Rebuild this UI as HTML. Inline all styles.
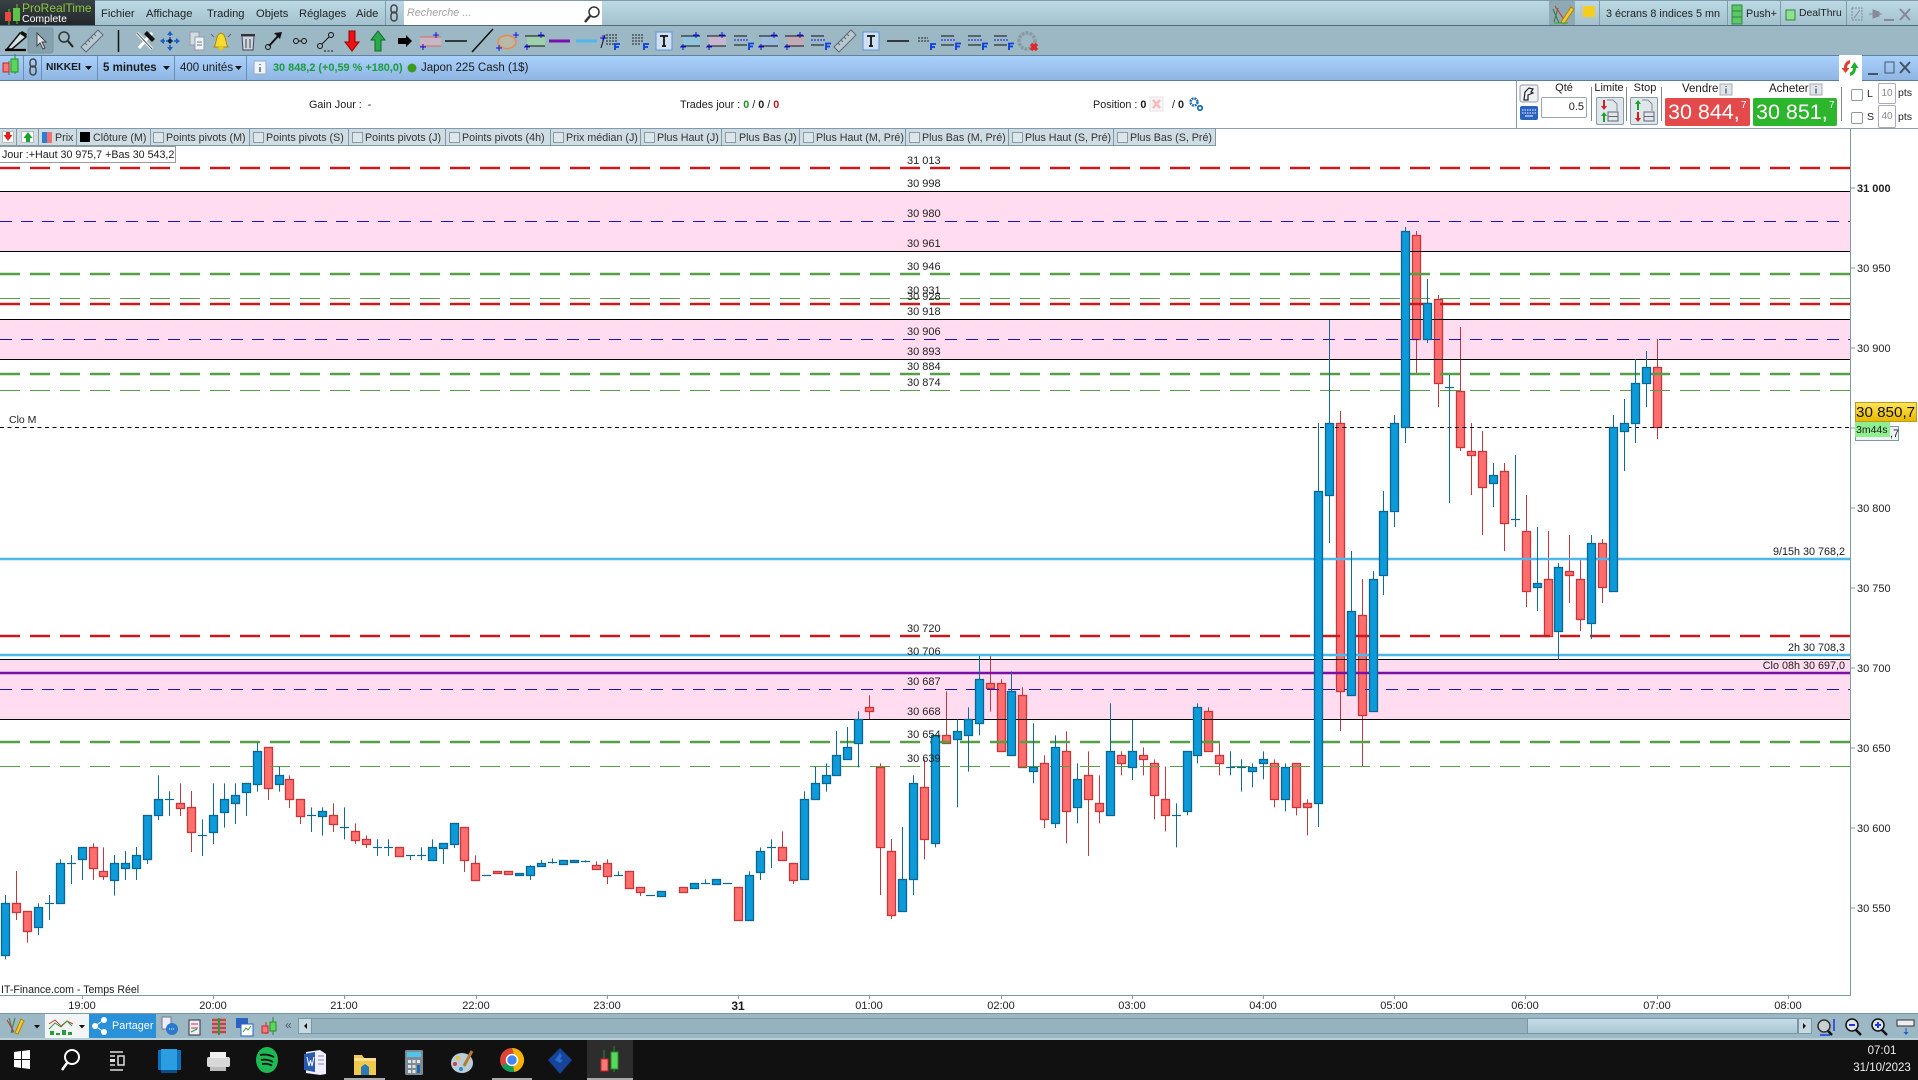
<!DOCTYPE html>
<html lang="fr"><head><meta charset="utf-8"><title>ProRealTime</title>
<style>
html,body{margin:0;padding:0;background:#fff}
body{position:relative;width:1918px;height:1080px;overflow:hidden;font:11px/14px "Liberation Sans",Arial,sans-serif;color:#1c1c1c}
.a{position:absolute}
.t{position:absolute;white-space:nowrap}
.c{position:absolute;white-space:nowrap;transform:translateX(-50%)}
.m{font-size:11.2px;color:#222}
.v{position:absolute;width:1px;background:#7f9aa8}
.p{position:absolute;white-space:nowrap;left:907px;color:#222;font-size:11px}
.y{position:absolute;white-space:nowrap;left:1857px;color:#222;font-size:11px}
.l{position:absolute;top:131px;white-space:nowrap;color:#333;font-size:10.7px}
.b{position:absolute;top:132px;width:9px;height:9px;border:1px solid #8b9ba3;background:#dde6ea}
svg{position:absolute;left:0;top:0}
</style></head><body>
<!-- bars -->
<div class="a" style="left:0;top:0;width:1918px;height:25px;background:linear-gradient(#bcd9e5,#a3c2ce);border-top:1px solid #7f9aa8;box-sizing:border-box"></div>
<div class="a" style="left:0;top:25px;width:1918px;height:1px;background:#4f6d7c"></div>
<div class="a" style="left:0;top:26px;width:1918px;height:29px;background:#9bb8c4"></div>
<div class="a" style="left:0;top:55px;width:1918px;height:25px;background:linear-gradient(#a9d1fc,#8fb6e2);border-top:1px solid #5f82a0;box-sizing:border-box"></div>
<div class="a" style="left:0;top:80px;width:1918px;height:1px;background:#5d7c99"></div>
<div class="a" style="left:0;top:128px;width:1918px;height:1px;background:#8ba0aa"></div>
<div class="a" style="left:0;top:0;width:95px;height:25px;background:linear-gradient(#3a4246,#22282b)"></div>
<div class="t" style="left:22px;top:2px;color:#8cc63f;font-size:12px;line-height:12px">ProRealTime</div>
<div class="t" style="left:22px;top:14px;color:#fff;font-size:10.5px;line-height:11px">Complete</div>
<div class="t m" style="left:101px;top:7px">Fichier</div>
<div class="t m" style="left:146px;top:7px">Affichage</div>
<div class="t m" style="left:207px;top:7px">Trading</div>
<div class="t m" style="left:256px;top:7px">Objets</div>
<div class="t m" style="left:299px;top:7px">Réglages</div>
<div class="t m" style="left:356px;top:7px">Aide</div>
<div class="v" style="left:385px;top:1px;height:24px"></div>
<div class="a" style="left:404px;top:1px;width:198px;height:24px;background:#fff"></div>
<div class="t" style="left:407px;top:6px;color:#a0a0a0;font-style:italic;font-size:10.8px">Recherche ...</div>
<div class="a" style="left:1549px;top:1px;width:26px;height:24px;background:#8ea9b4"></div>
<div class="v" style="left:1599px;top:1px;height:24px"></div>
<div class="t" style="left:1606px;top:7px;font-size:10.8px;color:#222">3 écrans 8 indices 5 mn</div>
<div class="v" style="left:1727px;top:1px;height:24px"></div>
<div class="t" style="left:1746px;top:7px;font-size:10.8px;color:#222">Push+</div>
<div class="v" style="left:1780px;top:1px;height:24px"></div>
<div class="t" style="left:1799px;top:7px;font-size:10.4px;color:#222">DealThru</div>
<div class="v" style="left:1846px;top:1px;height:24px"></div>
<!-- blue bar text -->
<div class="v" style="left:23px;top:56px;height:24px;background:#6a8db0"></div>
<div class="v" style="left:41px;top:56px;height:24px;background:#6a8db0"></div>
<div class="t" style="left:46px;top:61px;font-weight:bold;font-size:10.3px">NIKKEI</div>
<div class="v" style="left:97px;top:56px;height:24px;background:#6a8db0"></div>
<div class="t" style="left:103px;top:61px;font-size:11.5px;font-weight:bold">5 minutes</div>
<div class="v" style="left:174px;top:56px;height:24px;background:#6a8db0"></div>
<div class="t" style="left:180px;top:61px;font-size:11.5px">400 unités</div>
<div class="v" style="left:246px;top:56px;height:24px;background:#6a8db0"></div>
<div class="t" style="left:273px;top:61px;color:#1c9a3c;font-size:10.9px;font-weight:bold">30 848,2 (+0,59 % +180,0)</div>
<div class="t" style="left:421px;top:61px;font-size:11.5px">Japon 225 Cash (1$)</div>
<div class="a" style="left:1839px;top:55px;width:23px;height:26px;background:#fff"></div>
<!-- info row -->
<div class="t" style="left:309px;top:98px;font-size:10.8px">Gain Jour :&nbsp; -</div>
<div class="t" style="left:680px;top:98px;font-size:10.8px">Trades jour :&nbsp;<b style="color:#2a8a2a">0</b> / <b>0</b> / <b style="color:#b02020">0</b></div>
<div class="t" style="left:1093px;top:98px;font-size:10.8px">Position :&nbsp;<b>0</b></div>
<div class="t" style="left:1172px;top:98px;font-size:10.8px">/ <b>0</b></div>
<!-- order panel -->
<div class="v" style="left:1516px;top:81px;height:47px;background:#8ba0aa"></div>
<div class="c" style="left:1564px;top:81px">Qté</div>
<div class="a" style="left:1541px;top:97px;width:44px;height:19px;border:1px solid #9aa;border-radius:2px;background:#fff;text-align:right;line-height:19px;box-sizing:content-box"><span style="padding-right:2px">0.5</span></div>
<div class="c" style="left:1609px;top:81px">Limite</div>
<div class="c" style="left:1645px;top:81px">Stop</div>
<div class="v" style="left:1591px;top:87px;height:34px;background:#888"></div>
<div class="v" style="left:1626px;top:87px;height:34px;background:#888"></div>
<div class="v" style="left:1661px;top:87px;height:34px;background:#888"></div>
<div class="v" style="left:1841px;top:87px;height:34px;background:#888"></div>
<div class="a" style="left:1596px;top:97px;width:26px;height:26px;border:1px solid #8b9ba3;border-radius:2px;background:#dfe7ea"></div>
<div class="a" style="left:1630px;top:97px;width:26px;height:26px;border:1px solid #8b9ba3;border-radius:2px;background:#dfe7ea"></div>
<div class="t" style="left:1682px;top:82px;font-size:11.5px">Vendre</div>
<div class="t" style="left:1769px;top:82px;font-size:11.5px">Acheter</div>
<div class="a" style="left:1665px;top:98px;width:85px;height:28px;background:#e44a4c;border-radius:2px"></div>
<div class="a" style="left:1753px;top:98px;width:84px;height:28px;background:#2db52d;border-radius:2px"></div>
<div class="t" style="left:1668px;top:100px;color:#fff;font-size:21.5px;line-height:24px">30 844,</div>
<div class="t" style="left:1741px;top:100px;color:#fff;font-size:10px;line-height:12px">7</div>
<div class="t" style="left:1756px;top:100px;color:#fff;font-size:21.5px;line-height:24px">30 851,</div>
<div class="t" style="left:1829px;top:100px;color:#fff;font-size:10px;line-height:12px">7</div>
<div class="a" style="left:1851px;top:89px;width:10px;height:10px;border:1px solid #8b9ba3;border-radius:2px;background:#fff"></div>
<div class="a" style="left:1851px;top:112px;width:10px;height:10px;border:1px solid #8b9ba3;border-radius:2px;background:#fff"></div>
<div class="t" style="left:1867px;top:87px;font-size:10.5px">L</div>
<div class="t" style="left:1867px;top:110px;font-size:10.5px">S</div>
<div class="a" style="left:1878px;top:83px;width:16px;height:19px;border:1px solid #aab;border-radius:2px;text-align:center;line-height:19px;color:#888;font-size:10px">10</div>
<div class="a" style="left:1878px;top:105px;width:16px;height:21px;border:1px solid #aab;border-radius:2px;text-align:center;line-height:21px;color:#888;font-size:10px">40</div>
<div class="t" style="left:1898px;top:86px;font-size:10.5px">pts</div>
<div class="t" style="left:1898px;top:110px;font-size:10.5px">pts</div>
<!-- legend -->
<div class="a" style="left:0;top:128px;width:1216px;height:18px;background:#cfdce3;border:1px solid #7f9aa8;border-left:0;box-sizing:border-box"></div>
<div class="v" style="left:16px;top:128px;height:18px"></div><div class="v" style="left:38px;top:128px;height:18px"></div>
<div class="v" style="left:76px;top:128px;height:18px"></div><div class="v" style="left:150px;top:128px;height:18px"></div>
<div class="v" style="left:249px;top:128px;height:18px"></div><div class="v" style="left:348px;top:128px;height:18px"></div>
<div class="v" style="left:445px;top:128px;height:18px"></div><div class="v" style="left:550px;top:128px;height:18px"></div>
<div class="v" style="left:640px;top:128px;height:18px"></div><div class="v" style="left:721px;top:128px;height:18px"></div>
<div class="v" style="left:799px;top:128px;height:18px"></div><div class="v" style="left:905px;top:128px;height:18px"></div>
<div class="v" style="left:1008px;top:128px;height:18px"></div><div class="v" style="left:1113px;top:128px;height:18px"></div>
<div class="a" style="left:2px;top:131px;width:12px;height:12px;background:#fff;border:1px solid #bbb;box-sizing:border-box"></div>
<div class="a" style="left:21px;top:131px;width:13px;height:12px;background:#fff;border:1px solid #bbb;box-sizing:border-box"></div>
<div class="a" style="left:42px;top:132px;width:5px;height:11px;background:#2b7fd4"></div><div class="a" style="left:47px;top:132px;width:5px;height:11px;background:#f4706c"></div>
<div class="l" style="left:55px">Prix</div>
<div class="a" style="left:80px;top:132px;width:10px;height:10px;background:#000"></div>
<div class="l" style="left:93px">Clôture (M)</div>
<div class="b" style="left:153px"></div><div class="l" style="left:166px">Points pivots (M)</div>
<div class="b" style="left:253px"></div><div class="l" style="left:266px">Points pivots (S)</div>
<div class="b" style="left:352px"></div><div class="l" style="left:365px">Points pivots (J)</div>
<div class="b" style="left:449px"></div><div class="l" style="left:462px">Points pivots (4h)</div>
<div class="b" style="left:553px"></div><div class="l" style="left:566px">Prix médian (J)</div>
<div class="b" style="left:644px"></div><div class="l" style="left:657px">Plus Haut (J)</div>
<div class="b" style="left:725px"></div><div class="l" style="left:739px">Plus Bas (J)</div>
<div class="b" style="left:803px"></div><div class="l" style="left:816px">Plus Haut (M, Pré)</div>
<div class="b" style="left:909px"></div><div class="l" style="left:922px">Plus Bas (M, Pré)</div>
<div class="b" style="left:1012px"></div><div class="l" style="left:1025px">Plus Haut (S, Pré)</div>
<div class="b" style="left:1117px"></div><div class="l" style="left:1130px">Plus Bas (S, Pré)</div>

<!-- chart -->
<svg width="1918" height="1080" id="chart" style="z-index:1">
<rect x="0" y="191" width="1850" height="60" fill="#ffdcef"/>
<rect x="0" y="319" width="1850" height="40" fill="#ffdcef"/>
<rect x="0" y="659" width="1850" height="60" fill="#ffdcef"/>
<g id="rc"></g>
<g fill="none">
<g stroke="#c8191e" stroke-width="2.6" stroke-dasharray="20 10"><path d="M0 168H1850M0 304H1850M0 636H1850"/></g>
<g stroke="#55a045" stroke-width="2.6" stroke-dasharray="20 10"><path d="M0 274H1850M0 374H1850M0 742H1850"/></g>
<g stroke="#55a045" stroke-width="1" stroke-dasharray="20 10"><path d="M0 298.5H1850M0 390.5H1850M0 766.5H1850"/></g>
<g stroke="#1818b0" stroke-width="1" stroke-dasharray="12 9"><path d="M0 221.5H1850M0 339.5H1850M0 689.5H1850"/></g>
<g stroke="#000" stroke-width="1"><path d="M0 191.5H1850M0 251.5H1850M0 319.5H1850M0 359.5H1850M0 659.5H1850M0 719.5H1850"/></g>
<path d="M0 427.5H1850" stroke="#000" stroke-dasharray="4 3.5"/>
<path d="M0 559H1850M0 655H1850" stroke="#4eb8ec" stroke-width="2.6"/>
<path d="M0 673H1850" stroke="#7a10a8" stroke-width="2.4"/>
</g>
<g id="bc"></g>
<path d="M1850.5 128V995.5H0" fill="none" stroke="#7f9aa0" shape-rendering="crispEdges"/>
<path d="M1850 188h5M1850 268h5M1850 348h5M1850 428h5M1850 508h5M1850 588h5M1850 668h5M1850 748h5M1850 828h5M1850 908h5M82.5 995v4M213.5 995v4M344.5 995v4M476.5 995v4M607.5 995v4M738.5 995v4M869.5 995v4M1001.5 995v4M1132.5 995v4M1263.5 995v4M1394.5 995v4M1525.5 995v4M1657.5 995v4M1788.5 995v4" stroke="#7f9aa0" fill="none" shape-rendering="crispEdges"/>
</svg>

<div style="position:absolute;left:0;top:0;width:0;height:0;z-index:2">
<div class="a" style="left:0;top:146px;width:176px;height:17px;border:1px solid #999;border-left:0;background:#fff;box-sizing:border-box"></div>
<div class="t" style="left:2px;top:148px;font-size:10.7px">Jour :+Haut 30 975,7 +Bas 30 543,2</div>
<div class="p" style="top:154px">31 013</div><div class="p" style="top:177px">30 998</div><div class="p" style="top:207px">30 980</div>
<div class="p" style="top:237px">30 961</div><div class="p" style="top:260px">30 946</div><div class="p" style="top:284px">30 931</div>
<div class="p" style="top:290px">30 928</div><div class="p" style="top:305px">30 918</div><div class="p" style="top:325px">30 906</div>
<div class="p" style="top:345px">30 893</div><div class="p" style="top:360px">30 884</div><div class="p" style="top:376px">30 874</div>
<div class="p" style="top:622px">30 720</div><div class="p" style="top:645px">30 706</div><div class="p" style="top:675px">30 687</div>
<div class="p" style="top:705px">30 668</div><div class="p" style="top:728px">30 654</div><div class="p" style="top:752px">30 639</div>
<div class="t" style="left:9px;top:413px;font-size:10.5px">Clo M</div>
<div class="t" style="right:-1845px;top:545px;font-size:10.8px">9/15h 30 768,2</div>
<div class="t" style="right:-1845px;top:641px;font-size:10.8px">2h 30 708,3</div>
<div class="t" style="right:-1845px;top:659px;font-size:10.8px">Clo 08h 30 697,0</div>
<div class="t" style="left:1px;top:983px;font-size:10.6px">IT-Finance.com - Temps Réel</div>
<div class="y" style="top:182px;font-weight:bold">31 000</div>
<div class="y" style="top:262px">30 950</div><div class="y" style="top:342px">30 900</div><div class="y" style="top:502px">30 800</div>
<div class="y" style="top:582px">30 750</div><div class="y" style="top:662px">30 700</div><div class="y" style="top:742px">30 650</div>
<div class="y" style="top:822px">30 600</div><div class="y" style="top:902px">30 550</div>
<div class="a" style="left:1855px;top:426px;width:44px;height:15px;border:1px solid #7f9aa0;background:#eef3f5;box-sizing:border-box"></div>
<div class="t" style="left:1890px;top:427px">,7</div>
<div class="a" style="left:1855px;top:402px;width:62px;height:20px;background:linear-gradient(#ffe45a,#e9b800);border:1px solid #b89a20;box-sizing:border-box"></div>
<div class="t" style="left:1856px;top:404px;font-size:15.2px;line-height:17px;color:#111">30 850,7</div>
<div class="a" style="left:1855px;top:422px;width:35px;height:15px;background:#8fee8f"></div>
<div class="t" style="left:1856px;top:423px;font-size:10.5px">3m44s</div>
<div class="c" style="left:82px;top:999px">19:00</div><div class="c" style="left:213px;top:999px">20:00</div><div class="c" style="left:344px;top:999px">21:00</div>
<div class="c" style="left:476px;top:999px">22:00</div><div class="c" style="left:607px;top:999px">23:00</div><div class="c" style="left:738px;top:999px;font-weight:bold;font-size:12px">31</div>
<div class="c" style="left:869px;top:999px">01:00</div><div class="c" style="left:1001px;top:999px">02:00</div><div class="c" style="left:1132px;top:999px">03:00</div>
<div class="c" style="left:1263px;top:999px">04:00</div><div class="c" style="left:1394px;top:999px">05:00</div><div class="c" style="left:1525px;top:999px">06:00</div>
<div class="c" style="left:1657px;top:999px">07:00</div><div class="c" style="left:1788px;top:999px">08:00</div>
</div>

<!-- bottom bar -->
<div class="a" style="left:0;top:1013px;width:1918px;height:25px;background:#9bb8c4;border-top:1px solid #7a98a4;box-sizing:border-box"></div>
<div class="a" style="left:0;top:1038px;width:1918px;height:2px;background:#b9cfd8"></div>
<div class="a" style="left:45px;top:1014px;width:44px;height:24px;background:#f2f5f6"></div>
<div class="a" style="left:89px;top:1014px;width:67px;height:24px;background:#2a90d8"></div>
<div class="t" style="left:112px;top:1019px;color:#fff;font-size:10.8px">Partager</div>
<div class="a" style="left:298px;top:1018px;width:1514px;height:16px;background:#95b2be;border:1px solid #7a98a4;box-sizing:border-box"></div>
<div class="a" style="left:298px;top:1018px;width:14px;height:16px;background:#c6d8e0;border:1px solid #7a98a4;box-sizing:border-box"></div>
<div class="a" style="left:1527px;top:1018px;width:271px;height:16px;background:linear-gradient(#c5dde8,#a8c7d4);border:1px solid #7a98a4;box-sizing:border-box"></div>
<div class="a" style="left:1798px;top:1018px;width:14px;height:16px;background:#c6d8e0;border:1px solid #7a98a4;box-sizing:border-box"></div>
<div class="t" style="left:285px;top:1018px;color:#556;font-size:12px">«</div>
<!-- taskbar -->
<div class="a" style="left:0;top:1040px;width:1918px;height:40px;background:#111"></div>
<div class="a" style="left:587px;top:1040px;width:46px;height:40px;background:#2d2d2d"></div>
<div class="a" style="left:344px;top:1078px;width:41px;height:2px;background:#aaa"></div>
<div class="a" style="left:492px;top:1078px;width:40px;height:2px;background:#aaa"></div>
<div class="a" style="left:587px;top:1078px;width:46px;height:2px;background:#aaa"></div>
<div class="c" style="left:1882px;top:1044px;color:#eee;font-size:11.5px">07:01</div>
<div class="c" style="left:1882px;top:1061px;color:#eee;font-size:11.5px">31/10/2023</div>

<!-- icons -->
<svg width="1918" height="1080" style="z-index:3">
<defs>
<g id="fi" fill="none"><path d="M-10-6h13M-10 3h13" stroke="#111"/><path d="M-10-2h15" stroke="#1a1ae0" stroke-dasharray="2 1"/><path d="M5 8V1.500h5M5 4.500h4" stroke="#0a3fe0" stroke-width="1.800"/></g>
<g id="pl" stroke="#1212e0" fill="none"><path d="M-3 0h6M0-3v6"/></g>
<g id="ti"><rect x="-8" y="-9" width="16" height="18" fill="#cfe0f0" stroke="#5f8fe0"/><path d="M-4-5h8M0-5v10M-2 5h4" stroke="#111" stroke-width="1.800" fill="none"/></g>
<g id="ru"><path d="M-11 6L6-11l5 5L-6 11z" fill="#b7cad2" stroke="#667"/><path d="M-7 2l2 2M-4-1l2 2M-1-4l2 2M2-7l2 2" stroke="#667"/></g>
</defs>
<!-- logo -->
<g><path d="M9 9v16M17 4v20" stroke="#7b2"/><rect x="5" y="12" width="6" height="9" fill="#e64a3c"/><rect x="13" y="8" width="7" height="13" fill="#5fc24a"/></g>
<!-- title link -->
<g fill="none" stroke="#444" stroke-width="1.500"><rect x="391" y="5" width="6" height="8" rx="3"/><rect x="391" y="12" width="6" height="9" rx="3"/></g>
<g fill="none" stroke="#333" stroke-width="1.500"><circle cx="594" cy="12" r="5"/><path d="M590 16l-5 6" stroke-width="2.500"/></g>
<!-- title right -->
<path d="M1553 9l6 14M1558 8l-4 14" stroke="#3a7a3a" fill="none"/><path d="M1555 6l10 15" stroke="#c33" fill="none"/><path d="M1561 22l10-15 3 2-10 15z" fill="#f4c838" stroke="#a80"/><path d="M1554 23h14" stroke="#3a3"/>
<path d="M1581 5v17" stroke="#cbb"/><path d="M1583 6h12v11h-12z" fill="#f6cc1f"/>
<rect x="1732" y="5" width="10" height="19" fill="#5ec76a" stroke="#2a8a3a"/><path d="M1732 11h10M1732 17h10" stroke="#2a8a3a"/>
<rect x="1786" y="10" width="9" height="10" fill="#8fe08f" stroke="#2a8a3a"/>
<rect x="1852" y="8" width="10" height="12" fill="none" stroke="#889" stroke-dasharray="2 1"/><path d="M1854 18l6-8" stroke="#889"/>
<path d="M1869 14h4M1873 10v8l6-2v-4zM1879 14h3" fill="#889" stroke="#889"/>
<path d="M1884 20h10" stroke="#889" stroke-width="2"/>
<path d="M1900 9l10 11M1910 9l-10 11" stroke="#889" stroke-width="2" fill="none"/>
<!-- toolbar -->
<g fill="none">
<rect x="28" y="28" width="25" height="25" rx="2" fill="#84a1ad" stroke="#7a96a2"/>
<path d="M7 49L20 33l6 4-14 12z" stroke="#111" stroke-width="1.500" fill="#d7e2e7"/><path d="M20 33l6 4 1-3-5-3z" fill="#111"/><path d="M5 50h21" stroke="#000" stroke-width="2.200"/>
<path d="M37 33l0 13 3-3 3 6 2-1-3-6 4 0z" fill="#dfe7ea" stroke="#444"/>
<circle cx="64" cy="37" r="5" stroke="#333" stroke-width="1.500"/><path d="M68 41l5 6" stroke="#222" stroke-width="2"/>
<use href="#ru" x="92" y="41"/>
<path d="M118.500 30v22" stroke="#111" stroke-width="1.500"/>
<path d="M137 33l15 16M152 33l-13 15" stroke="#fff" stroke-width="3"/><path d="M147 31l8 8-3 3-8-8z" fill="#111"/><path d="M137 33l15 16" stroke="#555"/>
<path d="M170 33v16M162 41h16" stroke="#2a6ed0" stroke-dasharray="3 1" stroke-width="2"/><path d="M170 31l-3 4h6zM170 51l-3-4h6zM160 41l4-3v6zM180 41l-4-3v6z" fill="#1a5ec8"/><circle cx="170" cy="41" r="2" fill="#123"/>
<rect x="190" y="32" width="9" height="13" fill="#d0dce2" stroke="#99a"/><rect x="195" y="37" width="9" height="13" fill="#eef3f5" stroke="#99a"/><path d="M197 42h5M197 45h5" stroke="#778"/>
<path d="M214 47c3-3 1-12 7-14 6 2 4 11 7 14z" fill="#f7dc2e" stroke="#a88a10"/><circle cx="221" cy="48" r="2.500" fill="#e8c820"/><path d="M211 34l3 3M231 34l-3 3" stroke="#666"/>
<path d="M242 36h12l-1 14h-10z" fill="#cdd6da" stroke="#445"/><path d="M241 35h14" stroke="#333" stroke-width="2"/><path d="M246 39v9M250 39v9" stroke="#445"/>
<path d="M269 46l10-11" stroke="#111" stroke-width="2"/><path d="M282 32l-8 1 6 6z" fill="#111"/><circle cx="268" cy="47" r="2.500" stroke="#111"/>
<circle cx="296" cy="41" r="2.500" stroke="#111"/><circle cx="304" cy="41" r="2.500" stroke="#111"/><path d="M298 41h4" stroke="#111"/>
<circle cx="331" cy="35" r="2.500" stroke="#111"/><circle cx="320" cy="46" r="2.500" stroke="#111"/><path d="M322 44l7-7" stroke="#111"/><path d="M324 51h10" stroke="#111" stroke-dasharray="2 1.500"/>
<path d="M349 31h6v11h4l-7 9-7-9h4z" fill="#e11" stroke="#900"/>
<path d="M375 51h6v-11h4l-7-9-7 9h4z" fill="#2aa84a" stroke="#0c6c2c"/>
<path d="M398 38h8v-3l6 6-6 6v-3h-8z" fill="#000"/>
<rect x="420" y="37" width="21" height="9" fill="#c8b6c4"/><path d="M420 37h21M420 46h21" stroke="#d86868"/><use href="#pl" x="436" y="35"/><use href="#pl" x="423" y="47"/>
<path d="M445 41h22" stroke="#111" stroke-width="1.500"/>
<path d="M472 52l21-23" stroke="#111" stroke-width="1.500"/>
<ellipse cx="507" cy="42" rx="9" ry="6.500" stroke="#e88a50" stroke-width="1.500" fill="#b9b9a8"/><use href="#pl" x="516" y="35"/><use href="#pl" x="499" y="48"/>
<rect x="527" y="36" width="18" height="10" fill="#9fd0ae"/><path d="M525 36h20M525 46h20" stroke="#111"/><use href="#pl" x="541" y="35"/><use href="#pl" x="527" y="47"/>
<path d="M549 41h21" stroke="#7a10a8" stroke-width="3"/>
<path d="M576 41h21" stroke="#4eb8ec" stroke-width="3"/>
<path d="M606 35h12M606 38h12M606 41h12M606 44h8" stroke="#222" stroke-dasharray="2 1"/><path d="M601 48l4-13" stroke="#111"/><path d="M615 50v-6h5M615 47h4" stroke="#0a3fe0" stroke-width="1.800"/><use href="#pl" x="603" y="38"/>
<path d="M632 35h12M632 38h12M632 41h12M632 44h8" stroke="#222" stroke-dasharray="2 1"/><path d="M644 50v-6h5M644 47h4" stroke="#0a3fe0" stroke-width="1.800"/>
<use href="#ti" x="664" y="41"/>
<rect x="683" y="36" width="17" height="10" fill="#93c4de"/><path d="M681 36h19M681 46h19" stroke="#111"/><use href="#pl" x="696" y="35"/><use href="#pl" x="683" y="47"/>
<rect x="709" y="36" width="17" height="10" fill="#c7b6cf"/><path d="M707 36h19M707 46h19" stroke="#111"/><use href="#pl" x="722" y="35"/><use href="#pl" x="709" y="47"/>
<use href="#fi" x="744" y="42"/>
<rect x="761" y="36" width="17" height="10" fill="#9cb9e0"/><path d="M759 36h19M759 46h19" stroke="#111"/><use href="#pl" x="774" y="35"/><use href="#pl" x="761" y="47"/>
<rect x="787" y="36" width="17" height="10" fill="#c0aab5"/><path d="M785 36h19M785 46h19" stroke="#111"/><use href="#pl" x="800" y="35"/><use href="#pl" x="787" y="47"/>
<use href="#fi" x="821" y="42"/>
<use href="#ru" x="845" y="41"/>
<use href="#ti" x="871" y="41"/>
<path d="M887 41h22" stroke="#111" stroke-width="1.500"/>
<path d="M918 38h10M918 41h12" stroke="#222" stroke-dasharray="2 1"/><path d="M931 50v-6h5M931 47h4" stroke="#0a3fe0" stroke-width="1.800"/>
<use href="#fi" x="951" y="42"/><use href="#fi" x="978" y="42"/><use href="#fi" x="1004" y="42"/>
<circle cx="1027" cy="41" r="8" stroke="#8a9aa2" stroke-width="3.500" stroke-dasharray="3 1"/><path d="M1031 44l6 6M1037 44l-6 6" stroke="#e02828" stroke-width="3.500"/>
</g>
<!-- blue bar icons -->
<path d="M9 61v14M15 54v20" stroke="#2a8a2a"/><rect x="3" y="63" width="6" height="9" fill="#f47a7a" stroke="#c22"/><rect x="11" y="59" width="7" height="13" fill="#58d858" stroke="#2a8a2a"/>
<g fill="none" stroke="#444" stroke-width="1.500"><rect x="30" y="59" width="6" height="8" rx="3"/><rect x="30" y="66" width="6" height="9" rx="3"/></g>
<path d="M85 66h7l-3.500 4zM163 66h7l-3.500 4zM235 66h7l-3.500 4z" fill="#111"/>
<rect x="254" y="61" width="12" height="13" fill="#eef3f5" stroke="#9ab"/><path d="M260 64v1M260 67v5" stroke="#567" stroke-width="1.500"/>
<circle cx="412" cy="68" r="4.500" fill="#3d9a20"/>
<path d="M1850 60c-4 1-6 4-6 8h-2.500l4 5 4-5h-2.500c0-2 1-4 3-4.500z" fill="#e04030"/><path d="M1850 76c4-1 6-4 6-8h2.500l-4-6-4 6h2.500c0 2-1 4-3 4.500z" fill="#1fb030"/>
<path d="M1868 74h10" stroke="#456" stroke-width="2"/><rect x="1885" y="62" width="9" height="11" fill="none" stroke="#456"/><path d="M1900 62l10 11M1910 62l-10 11" stroke="#456" stroke-width="2" fill="none"/>
<!-- info row icons -->
<rect x="1150" y="97" width="13" height="14" fill="#f6f6f6" stroke="#e4e4e4"/><path d="M1153 100l7 8M1160 100l-7 8" stroke="#f6bcbc" stroke-width="2.500"/>
<circle cx="1194" cy="102" r="3.500" fill="none" stroke="#1f6fb0" stroke-width="2.500" stroke-dasharray="2 .8"/><circle cx="1200" cy="108" r="2.200" fill="none" stroke="#1f6fb0" stroke-width="1.800"/>
<!-- order panel icons -->
<rect x="1520" y="85" width="18" height="17" rx="2" fill="#eef2f4" stroke="#99a"/><path d="M1524 100l1-8 4-4 4 1-2 3 2 1-5 2v5z" fill="none" stroke="#222" stroke-width="1.200"/>
<rect x="1520" y="106" width="18" height="14" rx="2" fill="#2a62c0"/><path d="M1522 110h14M1522 113h14" stroke="#fff" stroke-dasharray="1.500 1"/><path d="M1525 116h8" stroke="#fff"/>
<path d="M1603 100v6h-2l3 4 3-4h-2v-6z" fill="#d02020"/><path d="M1603 122v-6h-2l3-4 3 4h-2v6z" fill="#18a030"/><rect x="1608" y="112" width="10" height="9" fill="#dfe7ea" stroke="#667"/><path d="M1608 116.500h10" stroke="#667"/><path d="M1607 100h6l4 4v7" fill="none" stroke="#889"/>
<path d="M1637 110v-6h-2l3-4 3 4h-2v6z" fill="#18a030"/><path d="M1637 112v6h-2l3 4 3-4h-2v-6z" fill="#d02020"/><rect x="1644" y="112" width="10" height="9" fill="#dfe7ea" stroke="#667"/><path d="M1644 116.500h10" stroke="#667"/><path d="M1642 100h6l4 4v7" fill="none" stroke="#889"/>
<rect x="1720" y="84" width="12" height="11" fill="#dde5e8" stroke="#aab"/><path d="M1726 86v1M1726 88.500v5" stroke="#667" stroke-width="1.500"/>
<rect x="1810" y="84" width="12" height="11" fill="#dde5e8" stroke="#aab"/><path d="M1816 86v1M1816 88.500v5" stroke="#667" stroke-width="1.500"/>
<!-- legend icons -->
<path d="M6 132h4v3h2.500l-4.500 6-4.500-6h2.500z" fill="#e02020"/><path d="M26 142h4v-4h2.500l-4.500-6-4.500 6h2.500z" fill="#18a030"/>
<!-- bottom icons -->
<path d="M9 1018l4 15M15 1018l-4 15" stroke="#3a7a3a" fill="none"/><path d="M7 1020l7 12" stroke="#c33"/><path d="M15 1033l6-14 3 2-6 13z" fill="#f4c838" stroke="#a80"/>
<path d="M34 1025h6l-3 3.500zM79 1025h6l-3 3.500z" fill="#111"/>
<path d="M49 1024l6-4 6 6 6-5 6 3" fill="none" stroke="#d04040"/><path d="M49 1029l6-6 6 4 6-6 5 5" fill="none" stroke="#3a9a3a"/><path d="M50 1035v-4h4v4zM56 1035v-2h4v2zM62 1035v-5h4v5zM68 1035v-3h4v3z" fill="#2a9a3a"/>
<g fill="#fff"><circle cx="95" cy="1026" r="3"/><circle cx="104" cy="1020" r="3"/><circle cx="104" cy="1032" r="3"/></g><path d="M95 1026l9-6M95 1026l9 6" stroke="#fff"/>
<rect x="162" y="1017" width="9" height="12" fill="#eef" stroke="#778"/><circle cx="172" cy="1029" r="6" fill="#2a7ad0"/><path d="M169 1029h6" stroke="#fff" stroke-dasharray="1 1"/>
<rect x="189" y="1020" width="11" height="15" fill="#eef" stroke="#333"/><path d="M191 1024h7M191 1028h7" stroke="#c33"/><path d="M191 1032l6-3" stroke="#2a9a3a"/>
<path d="M212 1020h14M212 1024h14M212 1028h14M212 1032h14" stroke="#d04040" stroke-width="2.500"/><path d="M219 1018v17" stroke="#2a9a3a" stroke-width="2"/>
<rect x="236" y="1018" width="12" height="10" fill="#2a62c0"/><rect x="241" y="1024" width="12" height="12" fill="#fff" stroke="#2a62c0"/><path d="M243 1032l3-4 2 2 3-4" stroke="#3a9a3a" fill="none"/>
<path d="M266 1022v12" stroke="#a33"/><rect x="262" y="1026" width="6" height="7" fill="#f47a7a" stroke="#c22"/><path d="M273 1017v18" stroke="#2a8a2a"/><rect x="270" y="1022" width="6" height="9" fill="#58d858" stroke="#2a8a2a"/>
<path d="M307 1023v6l-3-3zM1803 1023v6l3-3z" fill="#111"/>
<circle cx="1824" cy="1026" r="6" fill="#c8d0d4" stroke="#333" stroke-width="1.500"/><path d="M1828 1031l4 4" stroke="#111" stroke-width="2.500"/><path d="M1834 1019v12M1820 1035h10" stroke="#1a3ae0" stroke-width="1.500"/>
<circle cx="1852" cy="1025" r="6" fill="#dfe7ea" stroke="#111" stroke-width="1.500"/><path d="M1849 1025h6" stroke="#1a3ae0" stroke-width="2"/><path d="M1856 1030l5 5" stroke="#111" stroke-width="2.500"/>
<circle cx="1878" cy="1025" r="6" fill="#dfe7ea" stroke="#111" stroke-width="1.500"/><path d="M1875 1025h6M1878 1022v6" stroke="#1a3ae0" stroke-width="2"/><path d="M1882 1030l5 5" stroke="#111" stroke-width="2.500"/>
<rect x="1897" y="1020" width="17" height="6" fill="#eee" stroke="#333"/><path d="M1905.500 1028v4h-2l2.500 3 2.500-3h-2v-4z" fill="#1a5ec8"/>
<!-- taskbar icons -->
<path d="M14 1052l7-1v8h-7zM22 1051l8-1v9h-8zM14 1060h7v8l-7-1zM22 1060h8v9l-8-1z" fill="#fff"/>
<circle cx="72" cy="1057" r="7" fill="none" stroke="#fff" stroke-width="2"/><path d="M67 1063l-5 7" stroke="#fff" stroke-width="2.500"/>
<path d="M110 1052h13M110 1070h13M118 1056h6v9h-6zM110 1056h5M110 1065h5" fill="none" stroke="#ddd" stroke-width="1.500"/><rect x="110" y="1059" width="5" height="3" fill="#ddd"/>
<path d="M158 1050h23v20h-23z" fill="#0f70b8"/><rect x="161" y="1049" width="16" height="21" fill="#2a9ee0"/><path d="M161 1070h16v3h-16z" fill="#0a4f88"/>
<rect x="207" y="1057" width="23" height="10" rx="2" fill="#d8d8d8"/><rect x="210" y="1052" width="16" height="6" fill="#f0f0f0"/><rect x="210" y="1067" width="16" height="4" fill="#bbb"/>
<ellipse cx="267" cy="1060" rx="11" ry="13" fill="#1db954"/><path d="M260 1055c5-1 10 0 14 2M261 1060c4-1 9 0 12 2M262 1064c3-.5 7 0 10 1.500" stroke="#111" stroke-width="1.800" fill="none"/>
<path d="M306 1052l14-2 6 4v20l-6 1-14-2z" fill="#eef"/><path d="M304 1054l11-2v20l-11-2z" fill="#2a5ab0"/><path d="M307 1057l2 9 1.500-6 1.500 6 2-9" stroke="#fff" fill="none"/><path d="M318 1056h6M318 1060h6M318 1064h6" stroke="#88a"/>
<path d="M354 1055h8l2 3h12v17h-22z" fill="#f2c94c"/><path d="M361 1075v-8l4-3 4 3v8z" fill="#2a7ab8"/><path d="M354 1058h22v3h-22z" fill="#f8e090"/>
<rect x="405" y="1050" width="18" height="25" rx="1.500" fill="#7f8a92"/><rect x="407" y="1052" width="14" height="5" fill="#4fc3e8"/><path d="M408 1060h3v3h-3zM412.500 1060h3v3h-3zM417 1060h3v3h-3zM408 1065h3v3h-3zM412.500 1065h3v3h-3zM408 1070h3v3h-3zM412.500 1070h3v3h-3z" fill="#e0e6ea"/><rect x="417" y="1065" width="3" height="8" fill="#1a6ab0"/>
<ellipse cx="462" cy="1063" rx="11" ry="10" fill="#b8cdd8"/><circle cx="458" cy="1058" r="2" fill="#e8c020"/><circle cx="455" cy="1064" r="2" fill="#d04040"/><circle cx="461" cy="1069" r="2" fill="#2a8ad0"/><path d="M464 1066l8-15" stroke="#b87a30" stroke-width="3"/>
<circle cx="512" cy="1060" r="12" fill="#db4437"/><path d="M512 1060l-10.400 6a12 12 0 0 0 13 5.800z" fill="#0f9d58"/><path d="M512 1048a12 12 0 0 1 10.400 18L516 1060z" fill="#f4b400"/><path d="M512 1060l4-1 6.400 7a12 12 0 0 1-8 6z" fill="#f4b400"/><circle cx="512" cy="1060" r="5.500" fill="#4285f4" stroke="#fff" stroke-width="1.500"/>
<path d="M560 1048l12 12-12 14-12-14z" fill="#16449a"/><path d="M560 1053l-5 7 5 3 3-3-3-1 2-3z" fill="#2a6ed0"/>
<path d="M604 1050v20" stroke="#2a8a2a"/><path d="M614 1046v26" stroke="#2a8a2a"/><rect x="601" y="1059" width="7" height="12" fill="#f47a7a" stroke="#c22"/><rect x="611" y="1052" width="7" height="17" fill="#58d858" stroke="#2a8a2a"/>
</svg>
<script>
(function(){
var NS='http://www.w3.org/2000/svg',rc=document.getElementById('rc'),bc=document.getElementById('bc');
var A=[[0,525,550,705,718],[1,453,550,575,600],[1,574,574,632,668],[0,550,562,620,645],[0,525,550,550,600],[0,418,430,550,550],[0,405,430,430,492],[0,382,382,418,480],[1,370,382,443,480],[1,382,454,467,480],[0,405,430,479,527],[0,393,430,443,480],[0,381,406,443,480],[0,286,286,418,432],[0,166,238,286,300],[0,214,238,238,288],[1,190,250,263,288],[1,213,262,335,396],[0,298,346,346,408],[0,190,286,335,372],[0,190,238,275,323],[0,190,226,250,312],[0,190,190,215,288],[0,68,94,191,215],[1,82,82,203,240],[0,140,166,191,215],[1,166,178,238,264],[1,238,238,287,312],[0,262,286,286,336],[0,262,274,287,347],[1,250,286,311,336],[0,262,322,322,358],[1,310,334,359,372],[1,346,358,371,384],[0,358,382,382,408],[0,358,382,382,408],[1,382,382,407,407],[0,406,406,406,420],[0,382,406,406,420],[0,358,382,419,419],[0,370,370,383,432],[0,310,310,371,384],[1,322,322,419,456],[1,406,430,479,479],[0,466,466,466,467],[1,454,454,458,458],[1,454,454,461,461],[0,460,460,464,468],[0,436,438,464,480],[0,420,430,437,437],[0,415,426,426,431],[0,420,421,431,431],[0,421,421,427,427],[0,421,424,424,427],[1,424,436,446,446],[1,418,430,467,492],[0,454,466,466,468],[1,454,454,503,503],[1,502,502,515,528],[0,526,526,526,527],[0,514,514,527,527],null,[1,502,502,515,515],[0,490,490,503,503],[0,478,490,490,491],[0,478,478,491,491],[0,490,490,490,491],[1,502,502,599,599],[0,454,466,599,599],[0,382,394,455,480],[0,358,382,382,444],[1,334,382,419,419],[1,430,430,479,492]];
var B=[[0,574,598,837,837],[0,500,550,598,598],[0,490,526,550,575],[0,393,466,526,526],[0,381,442,478,478],[0,334,358,430,502],[1,286,322,334,358],[1,490,500,741,885],[1,717,753,945,957],[0,681,837,933,933],[0,526,549,837,885],[1,478,562,718,778],[0,406,406,730,742],[1,274,406,430,430],[0,358,394,418,622],[0,322,358,406,515],[0,168,238,370,406],[1,168,250,263,335],[1,238,250,454,454],[0,214,274,466,466],[1,262,286,502,502],[0,370,502,514,550],[1,466,490,658,684],[0,406,442,670,684],[1,394,454,634,730],[0,490,538,622,670],[1,454,526,598,768],[1,526,610,634,670],[0,310,454,646,646],[1,454,466,490,526],[0,360,454,502,540],[1,442,466,478,526],[1,478,490,586,658],[1,500,598,646,694],[0,610,646,646,742],[0,454,454,634,646],[0,310,322,466,490],[1,322,334,454,454],[1,430,466,490,526],[0,454,502,502,526],[0,478,500,500,575],[0,490,502,514,562],[0,454,478,490,538],[1,478,490,598,622],[0,490,502,598,634],[1,490,490,622,646],[1,598,610,622,706]];
var C=[[0,423,491,803,827],[0,320,423,495,543],[1,411,423,691,731],[0,551,611,695,695],[1,579,615,715,767],[0,571,579,711,711],[0,491,511,575,595],[0,415,423,511,527],[0,227,231,427,443],[1,231,235,339,375],[0,279,303,339,343],[1,295,299,383,407],[0,375,387,387,503],[1,327,391,447,451],[1,423,451,455,495],[1,431,451,487,535],[0,463,475,483,507],[1,463,471,523,551],[0,455,519,519,527],[1,495,531,591,607],[0,527,583,587,611],[1,531,579,636,636],[0,563,567,631,660],[1,535,571,575,603],[1,559,579,619,631],[0,535,543,623,639],[1,539,543,587,603],[0,415,427,591,591],[0,399,423,431,471],[0,359,383,423,443],[0,351,367,383,407],[1,339,367,427,439]];
function el(n,o,p){var e=document.createElementNS(NS,n);for(var k in o)e.setAttribute(k,o[k]);p.appendChild(e)}
function add(arr,start,base,f){arr.forEach(function(d,j){if(!d)return;var i=start+j,x=Math.round(5+i*10.94)+.5,g=d[0]?rc:bc,
 w=d[0]?'#bf3a3e':'#0f6a96',fill=d[0]?'#ff6e6e':'#0c9bd8',st=d[0]?'#c9363a':'#0b6694';
 var t=base+d[1]*f,bt=Math.round(base+d[2]*f),bb=Math.round(base+d[3]*f),l=base+d[4]*f;
 el('path',{d:'M'+x+' '+t+'V'+l,stroke:w,fill:'none','stroke-width':1},g);
 if(bt===bb){el('path',{d:'M'+(x-4.5)+' '+(bt+.5)+'h9',stroke:st,fill:'none','stroke-width':1.2},g)}
 else el('rect',{x:x-4,y:bt+.5,width:8,height:bb-bt,fill:fill,stroke:st,'stroke-width':1.3},g);
})}
add(A,0,720,1/3);add(B,73,600,1/3);add(C,120,0,1);
})();
</script>
</body></html>
